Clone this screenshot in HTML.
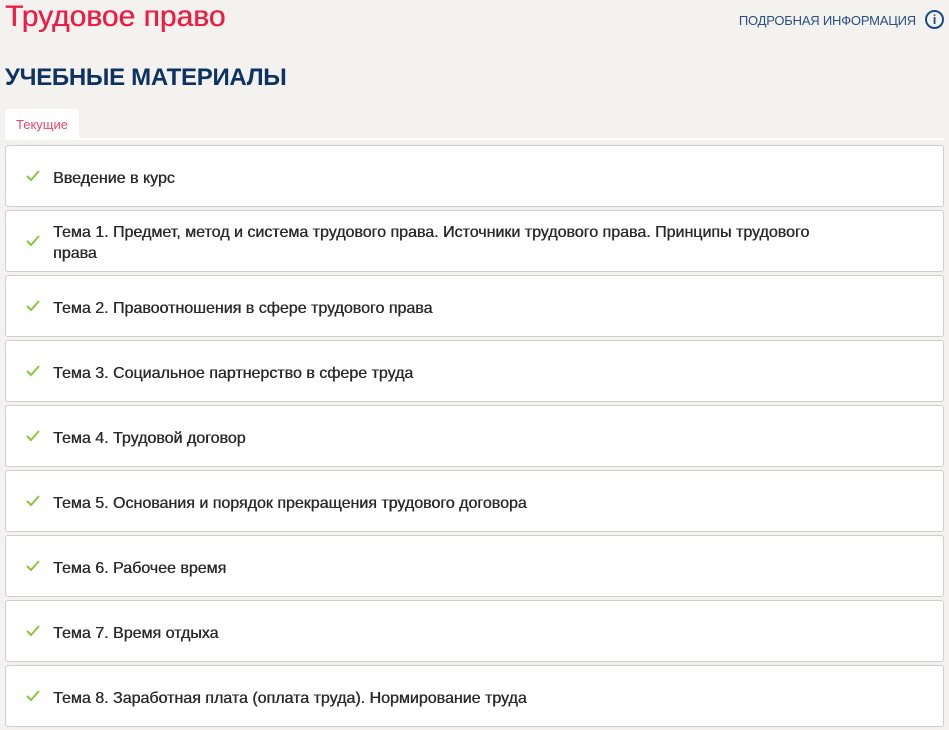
<!DOCTYPE html>
<html><head><meta charset="utf-8"><style>
body{margin:0;background:#f3f2ef;font-family:"Liberation Sans",sans-serif;width:949px;height:730px;overflow:hidden;position:relative}
.t{position:absolute;left:5px;top:0;color:#ee1c45;font-size:30px;line-height:34px;text-shadow:0.4px 0 0 #ee1c45}
.info{position:absolute;right:33px;top:13px;font-size:13px;color:#2b4f80;letter-spacing:-0.2px}
.ic{position:absolute;left:925px;top:10px;width:15px;height:15px;border:2px solid #1a4a8a;border-radius:50%;color:#1a4a8a;font-weight:bold;font-size:13px;text-align:center;line-height:15px}
.h{position:absolute;left:5px;top:64px;font-size:24px;font-weight:bold;color:#0d3263;letter-spacing:-0.3px}
.tab{position:absolute;left:5px;top:109px;width:74px;height:30px;background:#fff;border-radius:4px 4px 0 0;color:#ee4466;font-size:13px;text-align:center;line-height:32px}
.line{position:absolute;left:5px;top:138px;width:939px;height:2px;background:#fff}
.row{position:absolute;left:5px;width:937px;height:60px;background:#fff;border:1px solid #cfcfcf;border-radius:3px}
.row span{position:absolute;left:47px;top:2px;height:60px;display:flex;align-items:center;font-size:16px;color:#2a2a2a;width:790px;line-height:21px;text-shadow:0.4px 0 0 #2a2a2a}
.row svg{position:absolute;left:20px;top:24px}
</style></head><body>
<div class="t">Трудовое право</div>
<div class="info">ПОДРОБНАЯ ИНФОРМАЦИЯ</div>
<div class="ic">i</div>
<div class="h">УЧЕБНЫЕ МАТЕРИАЛЫ</div>
<div class="tab">Текущие</div>
<div class="line"></div>
<div class="row" style="top:145px"><svg width="14" height="12"><path d="M1 6l4 4 8-9" stroke="#8cc63f" stroke-width="2" fill="none"/></svg><span>Введение в курс</span></div>
<div class="row" style="top:210px"><svg width="14" height="12"><path d="M1 6l4 4 8-9" stroke="#8cc63f" stroke-width="2" fill="none"/></svg><span>Тема 1. Предмет, метод и система трудового права. Источники трудового права. Принципы трудового права</span></div>
<div class="row" style="top:275px"><svg width="14" height="12"><path d="M1 6l4 4 8-9" stroke="#8cc63f" stroke-width="2" fill="none"/></svg><span>Тема 2. Правоотношения в сфере трудового права</span></div>
<div class="row" style="top:340px"><svg width="14" height="12"><path d="M1 6l4 4 8-9" stroke="#8cc63f" stroke-width="2" fill="none"/></svg><span>Тема 3. Социальное партнерство в сфере труда</span></div>
<div class="row" style="top:405px"><svg width="14" height="12"><path d="M1 6l4 4 8-9" stroke="#8cc63f" stroke-width="2" fill="none"/></svg><span>Тема 4. Трудовой договор</span></div>
<div class="row" style="top:470px"><svg width="14" height="12"><path d="M1 6l4 4 8-9" stroke="#8cc63f" stroke-width="2" fill="none"/></svg><span>Тема 5. Основания и порядок прекращения трудового договора</span></div>
<div class="row" style="top:535px"><svg width="14" height="12"><path d="M1 6l4 4 8-9" stroke="#8cc63f" stroke-width="2" fill="none"/></svg><span>Тема 6. Рабочее время</span></div>
<div class="row" style="top:600px"><svg width="14" height="12"><path d="M1 6l4 4 8-9" stroke="#8cc63f" stroke-width="2" fill="none"/></svg><span>Тема 7. Время отдыха</span></div>
<div class="row" style="top:665px"><svg width="14" height="12"><path d="M1 6l4 4 8-9" stroke="#8cc63f" stroke-width="2" fill="none"/></svg><span>Тема 8. Заработная плата (оплата труда). Нормирование труда</span></div>
</body></html>
